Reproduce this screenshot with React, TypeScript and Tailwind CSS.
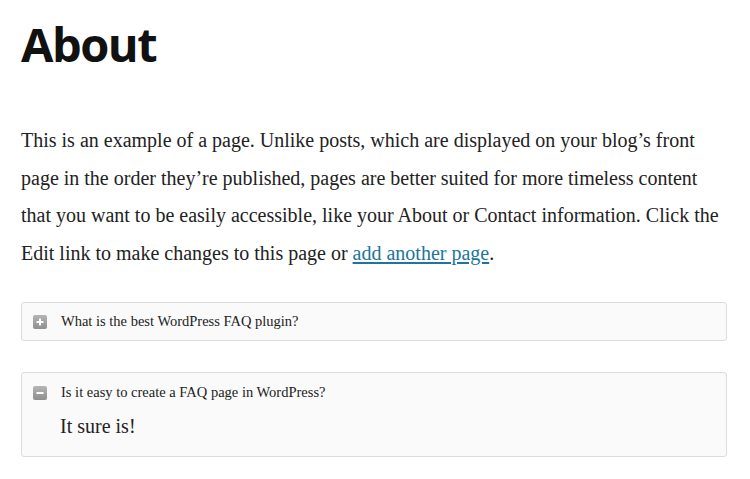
import React from 'react';

const serif = "font-['Liberation_Serif','Times_New_Roman',serif]";

const FaqIcon = ({ open }: { open: boolean }) => (
  <span className="inline-flex w-[14px] h-[14px] shrink-0 items-center justify-center rounded-[2px] bg-gradient-to-b from-[#b5b5b5] to-[#8f8f8f]">
    <svg width="10" height="10" viewBox="0 0 10 10">
      <rect x="1.5" y="4" width="7" height="2" fill="#fff" />
      {!open && <rect x="4" y="1.5" width="2" height="7" fill="#fff" />}
    </svg>
  </span>
);

export default function App() {
  return (
    <div className="min-h-screen bg-white px-[21px] text-[#1a1a1a]">
      <h1 className="pt-[14px] font-['Open_Sans',sans-serif] text-[47px] font-bold leading-[60px] tracking-[-1.5px] text-[#111]">
        About
      </h1>

      <p className={`${serif} mt-[48px] text-[20px] leading-[37.5px] text-[#222]`}>
        This is an example of a page. Unlike posts, which are displayed on your blog’s front
        <br />
        page in the order they’re published, pages are better suited for more timeless content
        <br />
        that you want to be easily accessible, like your About or Contact information. Click the
        <br />
        Edit link to make changes to this page or{' '}
        <a href="#" className="text-[#21759b] underline underline-offset-2">
          add another page
        </a>
        .
      </p>

      <div className="mt-[30px] flex w-[706px] flex-col gap-[31px]">
        <div className="rounded-[3px] border border-[#dcdcdc] bg-[#fafafa] h-[39px] flex items-center gap-[14px] pl-[11px]">
          <FaqIcon open={false} />
          <span className={`${serif} text-[14.5px] text-[#222]`}>What is the best WordPress FAQ plugin?</span>
        </div>

        <div className="rounded-[3px] border border-[#dcdcdc] bg-[#fafafa] pb-[16px]">
          <div className="flex items-center gap-[14px] pl-[11px] h-[39px]">
            <FaqIcon open={true} />
            <span className={`${serif} text-[14.5px] text-[#222]`}>Is it easy to create a FAQ page in WordPress?</span>
          </div>
          <p className={`${serif} pl-[38px] text-[20px] leading-[28px] text-[#222]`}>It sure is!</p>
        </div>
      </div>
    </div>
  );
}
